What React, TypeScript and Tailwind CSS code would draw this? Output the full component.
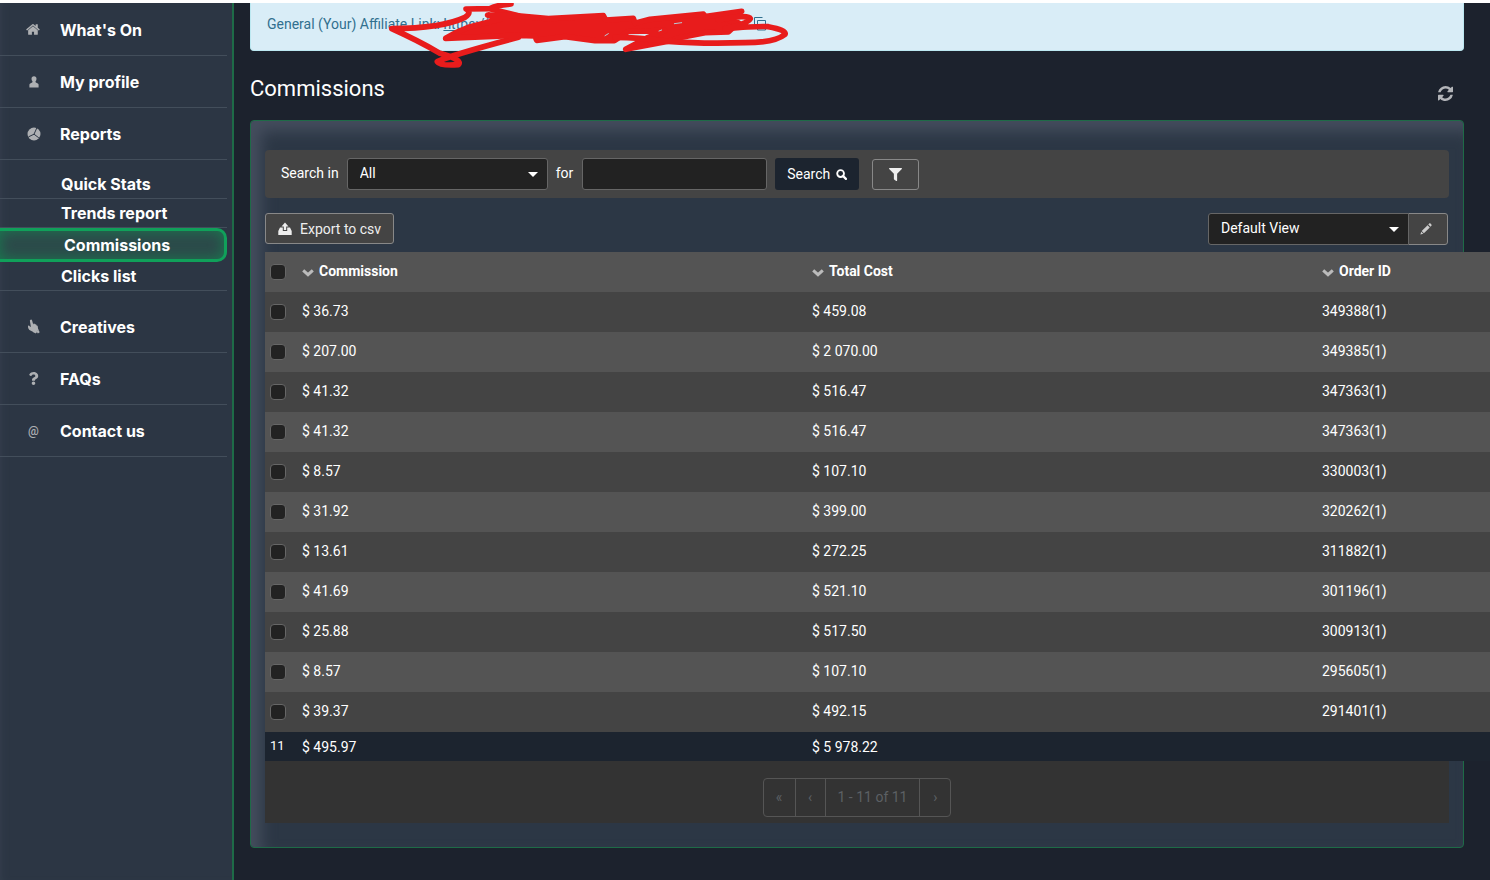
import React from 'react';
import { FaFilter, FaQuestion } from 'react-icons/fa';

interface IconProps {
  className?: string;
}

interface Commission {
  commission: string;
  totalCost: string;
  orderId: string;
}

const commissions: Commission[] = [
  { commission: '$ 36.73', totalCost: '$ 459.08', orderId: '349388(1)' },
  { commission: '$ 207.00', totalCost: '$ 2 070.00', orderId: '349385(1)' },
  { commission: '$ 41.32', totalCost: '$ 516.47', orderId: '347363(1)' },
  { commission: '$ 41.32', totalCost: '$ 516.47', orderId: '347363(1)' },
  { commission: '$ 8.57', totalCost: '$ 107.10', orderId: '330003(1)' },
  { commission: '$ 31.92', totalCost: '$ 399.00', orderId: '320262(1)' },
  { commission: '$ 13.61', totalCost: '$ 272.25', orderId: '311882(1)' },
  { commission: '$ 41.69', totalCost: '$ 521.10', orderId: '301196(1)' },
  { commission: '$ 25.88', totalCost: '$ 517.50', orderId: '300913(1)' },
  { commission: '$ 8.57', totalCost: '$ 107.10', orderId: '295605(1)' },
  { commission: '$ 39.37', totalCost: '$ 492.15', orderId: '291401(1)' },
];

const columns = ['Commission', 'Total Cost', 'Order ID'];

const reportLinks = ['Quick Stats', 'Trends report', 'Commissions', 'Clicks list'];

function HomeIcon({ className }: IconProps) {
  return (
    <svg viewBox="0 0 1792 1792" fill="currentColor" className={className} aria-hidden="true">
      <path d="M1408 992v480q0 26-19 45t-45 19h-384v-384h-256v384h-384q-26 0-45-19t-19-45v-480q0-1 .5-3t.5-3l575-474 575 474q1 2 1 6zm223-69l-62 74q-8 9-21 11h-3q-13 0-21-7l-692-577-692 577q-12 8-24 7-13-2-21-11l-62-74q-8-10-7-23.500t11-21.500l719-599q32-26 76-26t76 26l244 204v-195q0-14 9-23t23-9h192q14 0 23 9t9 23v408l219 182q10 8 11 21.500t-7 23.500z" />
    </svg>
  );
}

function UserIcon({ className }: IconProps) {
  return (
    <svg viewBox="0 0 12 12" fill="currentColor" className={className} aria-hidden="true">
      <path d="M6 .3C7.600.3 8.500 1.200 8.500 2.700c0 1-.3 1.900-.9 2.600-.3.400-.2 1 .3 1.300l1.900 1c.5.300.8.700.8 1.200v2.600H1.400V8.800c0-.5.3-.9.8-1.200l1.900-1c.5-.3.6-.9.3-1.300-.6-.7-.9-1.600-.9-2.600C3.500 1.200 4.400.3 6 .3z" />
    </svg>
  );
}

function ReportsIcon({ className }: IconProps) {
  return (
    <svg viewBox="0 0 14 14" className={className} aria-hidden="true">
      <circle cx="7" cy="7" r="6.500" fill="currentColor" />
      <path d="M9.800 1 7 7.200 1.600 9.800M7 7.200l4.800 3.600" fill="none" stroke="#2c3644" strokeWidth="1" />
    </svg>
  );
}

function HandIcon({ className }: IconProps) {
  return (
    <svg viewBox="0 0 14 16" fill="currentColor" className={className} aria-hidden="true">
      <path d="M4 .6c.7-.2 1.300.2 1.500 1l1.200 4.200.5-.9c.5-.4 1-.2 1.200.3l.3.700c.4-.5 1.100-.4 1.300.2l.3.900c.5-.3 1-.1 1.200.5l.5 3.100.7 1.300-5 3-1.400-1.300-3.700-1.900C1.400 10.800.6 7.600 1.300 7.100c.6-.4 1.300 0 1.800.9L4.200 8.600 3.100 1.800C3 1.200 3.400.7 4 .6z" />
      <path d="m8 14.300 4.400-2.600 1.300 2.600-2 1.200-.9-1.300-1.800 1.300z" />
    </svg>
  );
}

function RefreshIcon({ className }: IconProps) {
  return (
    <svg viewBox="0 0 1536 1536" fill="currentColor" className={className} aria-hidden="true">
      <path d="M1511 928q0 5-1 7-64 268-268 434.500t-478 166.500q-146 0-282.500-55t-243.500-157l-129 129q-19 19-45 19t-45-19-19-45v-448q0-26 19-45t45-19h448q26 0 45 19t19 45-19 45l-137 137q71 66 161 102t187 36q134 0 250-65t186-179q11-17 53-117 8-23 30-23h192q13 0 22.500 9.500t9.500 22.500zm25-800v448q0 26-19 45t-45 19h-448q-26 0-45-19t-19-45 19-45l138-138q-148-137-349-137-134 0-250 65t-186 179q-11 17-53 117-8 23-30 23h-199q-13 0-22.500-9.500t-9.500-22.500v-7q65-268 270-434.500t480-166.500q146 0 284 55.500t245 156.500l130-129q19-19 45-19t45 19 19 45z" />
    </svg>
  );
}

function SearchIcon({ className }: IconProps) {
  return (
    <svg viewBox="0 0 12 12" fill="none" stroke="currentColor" className={className} aria-hidden="true">
      <circle cx="5" cy="5" r="3.700" strokeWidth="2" />
      <path d="m7.800 7.800 3 3" strokeWidth="2.400" strokeLinecap="round" />
    </svg>
  );
}

function ExportIcon({ className }: IconProps) {
  return (
    <svg viewBox="0 0 14 14" fill="currentColor" className={className} aria-hidden="true">
      <path d="M7 .5 10.500 4.500H8.200V8H5.800V4.500H3.500z" />
      <path d="M2 5.500H4.800V9h4.400V5.500H12l1.700 3.500v4H.3V9z" />
    </svg>
  );
}

function PencilIcon({ className }: IconProps) {
  return (
    <svg viewBox="0 0 12 12" fill="currentColor" className={className} aria-hidden="true">
      <path d="M9.200.6c.4-.4.9-.4 1.300 0l.9.9c.4.400.4.900 0 1.300l-.9.900-2.200-2.200zM7.600 2.200l2.200 2.200-5.900 5.900-2.200-2.200zM1.200 8.700l2.100 2.100-2.900.8z" />
    </svg>
  );
}

function ChevronIcon({ className }: IconProps) {
  return (
    <svg viewBox="0 0 12 8" fill="none" stroke="currentColor" strokeWidth="3" className={className} aria-hidden="true">
      <path d="m1.200 1.300 4.800 4.400 4.800-4.400" />
    </svg>
  );
}

function CopyIcon({ className }: IconProps) {
  return (
    <svg viewBox="0 0 13 14" fill="none" stroke="currentColor" className={className} aria-hidden="true">
      <path d="M1.500 10V.5h8" />
      <path d="M4.500 3.500h8v9.500h-8z" />
    </svg>
  );
}

function Caret() {
  return (
    <span className="pointer-events-none absolute right-2.5 top-3.5 border-x-5 border-t-5 border-x-transparent border-t-white" />
  );
}

// red marker drawn over the private part of the link
function Scribble() {
  return (
    <svg
      viewBox="0 0 1230 216"
      className="pointer-events-none absolute -top-[3px] left-[134px] h-[72px] w-[410px]"
      fill="none"
      stroke="#e81c1c"
      strokeWidth="17"
      strokeLinecap="round"
      strokeLinejoin="round"
      aria-hidden="true"
    >
      <path d="M378 12Q330 16 315 26L243 27Q262 36 240 52Q170 85 20 86Q100 122 165 160Q235 180 220 194Q165 198 157 185Q200 165 400 112" />
      <path d="M320 28 400 47" />
      <path
        fill="#e81c1c"
        d="M182 115 215 97 250 82 345 58 308 45 390 47 490 56 655 47 662 60 745 55 750 70 795 58 955 42 960 50 1070 34 1010 55 1060 68 1030 96 960 98 890 112 850 124 790 135 722 148 790 112 840 92 730 94 688 122 630 122 540 110 455 121 450 108 400 106 182 115Z"
      />
      <path d="M1000 60Q1090 42 1096 56Q1090 70 1020 86Q1120 78 1150 80Q1205 90 1200 103Q1170 128 1080 128Q950 132 850 124Q760 112 690 112" />
      <path d="M868 71 890 68M822 93 830 90M660 107 670 101" stroke="#b9c9d4" strokeWidth="3" />
    </svg>
  );
}

function SidebarLink({ label, icon }: { label: string; icon: React.ReactNode }) {
  return (
    <a href="#" className="mr-[5px] flex h-[52px] items-center border-b border-[#434e5b] pl-[26px] text-white">
      <span className="flex w-[15px] justify-center text-[#aeb0b3]">{icon}</span>
      <span className="ml-[19px]">{label}</span>
    </a>
  );
}

function Checkbox({ label }: { label: string }) {
  return (
    <input
      type="checkbox"
      aria-label={label}
      className="ml-[5px] block size-4 appearance-none rounded border border-[#666] bg-[#222] checked:bg-[#0f9f5a]"
    />
  );
}

export default function App() {
  return (
    <div className="flex min-h-screen overflow-hidden border-t-3 border-white bg-[#1c222d] font-['Roboto','Liberation_Sans',sans-serif] text-sm text-white">
      <nav className="w-[234px] shrink-0 border-r-2 border-[#1e6b47] bg-[#2c3644] pt-px font-['Inter','Open_Sans',sans-serif] text-base font-bold shadow-[inset_6px_0_8px_-6px_#37414f]">
        <SidebarLink label="What's On" icon={<HomeIcon className="size-[15px]" />} />
        <SidebarLink label="My profile" icon={<UserIcon className="size-3" />} />
        <SidebarLink label="Reports" icon={<ReportsIcon className="size-[14px]" />} />
        <ul className="mr-[5px] py-2.5">
          {reportLinks.map((label) =>
            label === 'Commissions' ? (
              <li key={label}>
                <a
                  href="#"
                  aria-current="page"
                  className="flex h-[34px] items-center rounded-r-[10px] border-3 border-l-0 border-[#10a05a] bg-[#2c4a4a] pl-16 shadow-[inset_0_0_14px_#1a7a50]"
                >
                  {label}
                </a>
              </li>
            ) : (
              <li key={label}>
                <a href="#" className="flex h-[29px] items-center border-b border-[#434e5b] pl-[61px]">
                  {label}
                </a>
              </li>
            )
          )}
        </ul>
        <SidebarLink label="Creatives" icon={<HandIcon className="h-[15px] w-[13px]" />} />
        <SidebarLink label="FAQs" icon={<FaQuestion className="size-[13px]" />} />
        <SidebarLink label="Contact us" icon={<span className="font-['Roboto',sans-serif] text-xs font-medium">@</span>} />
      </nav>

      <main className="min-w-0 flex-1 pl-4 pr-[26px]">
        <div className="relative flex h-12 items-center rounded-b border border-t-0 border-[#bce8f1] bg-[#d9edf7] px-4 pb-1.5 text-[#31708f]">
          <p>
            General (Your) Affiliate Link:{' '}
            <a href="#" className="underline">https://</a>
          </p>
          <button type="button" aria-label="Copy link" className="ml-[264px]">
            <CopyIcon className="h-[14px] w-[13px]" />
          </button>
          <Scribble />
        </div>

        <header className="flex h-[69px] items-center justify-between pr-[11px]">
          <h1 className="pt-1.5 text-[22px] leading-7">Commissions</h1>
          <button type="button" aria-label="Refresh" className="pt-4 text-[#b3b5b9]">
            <RefreshIcon className="size-[15px]" />
          </button>
        </header>

        <section className="rounded border border-[#1e6b47] bg-[#2c3745] px-3.5 pb-6 pt-[29px] shadow-[inset_10px_10px_15px_#454e5e]">
          <form className="flex h-12 items-center rounded bg-[#444] pl-4">
            <label htmlFor="search-field" className="pb-0.5">Search in</label>
            <div className="relative ml-2">
              <select id="search-field" className="block h-8 w-[201px] appearance-none rounded-[3px] border border-[#666] bg-[#222] px-3 pb-0.5">
                <option>All</option>
              </select>
              <Caret />
            </div>
            <label htmlFor="search-text" className="ml-2 pb-0.5">for</label>
            <input id="search-text" type="text" className="ml-[9px] h-8 w-[185px] rounded-[3px] border border-[#666] bg-[#222] px-3" />
            <button type="button" className="ml-2 flex h-8 items-center gap-1.5 rounded-[3px] bg-[#1c242f] px-3">
              Search
              <SearchIcon className="size-[11px]" />
            </button>
            <button type="button" aria-label="Filter" className="ml-[13px] flex h-[31px] w-[47px] items-center justify-center rounded-[3px] border border-[#888] text-[#eee]">
              <FaFilter className="size-[13px]" />
            </button>
          </form>

          <div className="flex h-[54px] items-start justify-between pr-px pt-[15px]">
            <button type="button" className="flex h-[31px] items-center gap-2 rounded-[3px] border border-[#888] bg-[#444] px-3 text-[#eee]">
              <ExportIcon className="size-[14px]" />
              Export to csv
            </button>
            <div className="flex">
              <div className="relative">
                <select aria-label="View" className="block h-8 w-[201px] appearance-none rounded-l-[3px] border border-[#666] bg-[#222] px-3 pb-0.5">
                  <option>Default View</option>
                </select>
                <Caret />
              </div>
              <button type="button" aria-label="Edit view" className="-ml-px flex h-8 w-10 items-center justify-center rounded-r-[3px] border border-[#888] bg-[#444] pr-1 text-[#ccc]">
                <PencilIcon className="size-3" />
              </button>
            </div>
          </div>

          {/* the table is wider than the panel and runs past its right edge */}
          <table className="w-[1559px] table-fixed text-left">
            <colgroup>
              <col className="w-[29px]" />
              <col />
              <col />
              <col />
            </colgroup>
            <thead>
              <tr className="h-10 bg-[#545454]">
                <th>
                  <Checkbox label="Select all" />
                </th>
                {columns.map((column) => (
                  <th key={column} className="px-2 pb-0.5 font-bold">
                    <button type="button" className="flex items-center gap-[5px]">
                      <ChevronIcon className="mt-1 h-2 w-3 text-[#bbb]" />
                      {column}
                    </button>
                  </th>
                ))}
              </tr>
            </thead>
            <tbody>
              {commissions.map((row, index) => (
                <tr key={index} className="h-10 odd:bg-[#444] even:bg-[#545454]">
                  <td>
                    <Checkbox label={`Select order ${row.orderId}`} />
                  </td>
                  <td className="px-2 pb-0.5">{row.commission}</td>
                  <td className="px-2 pb-0.5">{row.totalCost}</td>
                  <td className="px-2 pb-0.5">{row.orderId}</td>
                </tr>
              ))}
            </tbody>
            <tfoot>
              <tr className="h-[29px] bg-[#1c242f]">
                <td className="pl-[5px] text-[13px]">11</td>
                <td className="px-2">$ 495.97</td>
                <td className="px-2">$ 5 978.22</td>
                <td />
              </tr>
            </tfoot>
          </table>

          <div className="flex h-[62px] items-center justify-center bg-[#333] pt-2.5 text-[#5c6064]">
            <div className="flex h-[39px] divide-x divide-[#555] rounded border border-[#555]">
              <button type="button" disabled aria-label="First page" className="w-8">«</button>
              <button type="button" disabled aria-label="Previous page" className="w-[30px]">‹</button>
              <span className="flex items-center px-3">1 - 11 of 11</span>
              <button type="button" disabled aria-label="Next page" className="w-[30px]">›</button>
            </div>
          </div>
        </section>
      </main>
    </div>
  );
}
